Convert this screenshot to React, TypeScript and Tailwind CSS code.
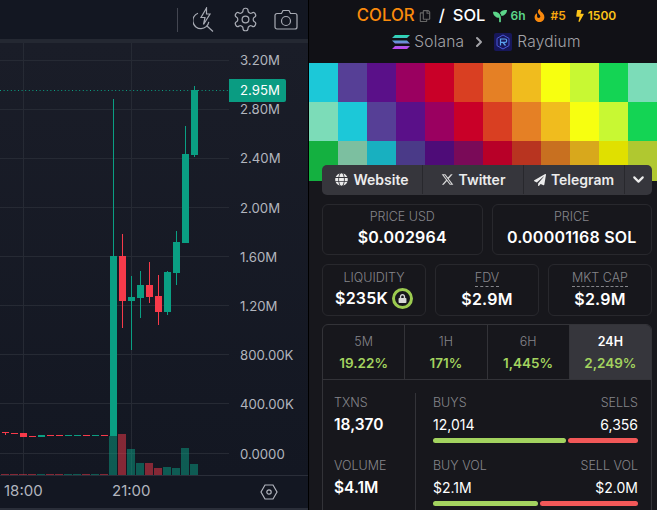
import { FaGlobe, FaPaperPlane, FaFire, FaBolt, FaSeedling, FaRegCopy, FaLock } from "react-icons/fa";
import { FaXTwitter } from "react-icons/fa6";
import { LuChevronDown, LuChevronRight } from "react-icons/lu";

const UP = "#0a9f83";
const DOWN = "#f73a4a";

// x, body top, body bottom, wick top, wick bottom
const candles: [number, number, number, number, number, string][] = [
  [110, 256, 436, 99, 436, UP],
  [119, 256, 301, 234, 328, DOWN],
  [128, 297, 301, 276, 350, UP],
  [137, 285, 298, 271, 318, UP],
  [146, 285, 297, 262, 303, DOWN],
  [155, 296, 312, 275, 325, DOWN],
  [164, 272, 312, 271, 315, UP],
  [173, 242, 273, 231, 285, UP],
  [182, 154, 243, 126, 243, UP],
  [191, 90, 155, 86, 157, UP],
  [2, 432, 433, 432, 435, DOWN],
  [11, 433, 434, 433, 434, DOWN],
  [20, 433, 437, 433, 437, DOWN],
  [29, 436, 437, 436, 437, DOWN],
  [38, 435, 437, 435, 437, UP],
  [47, 435, 436, 435, 436, DOWN],
  [56, 435, 436, 435, 436, DOWN],
  [65, 435, 436, 435, 436, UP],
  [74, 435, 436, 435, 436, UP],
  [83, 435, 436, 435, 436, DOWN],
  [92, 435, 436, 435, 436, UP],
  [101, 435, 436, 435, 436, DOWN],
];

const volumes: [number, number, string][] = [
  [1, 474, DOWN], [10, 474, DOWN], [19, 474, DOWN], [28, 474, DOWN], [37, 474, UP], [46, 474, DOWN],
  [55, 474, DOWN], [64, 474, UP], [73, 474, UP], [82, 474, DOWN], [91, 474, UP], [100, 474, DOWN],
  [109, 436, UP], [118, 434, DOWN], [127, 449, UP], [136, 463, UP], [145, 463, DOWN],
  [154, 468, DOWN], [163, 467, UP], [172, 468, UP], [181, 448, UP], [190, 464, UP],
];

const gridY = [60, 109, 158, 207, 256, 305, 354, 403, 453];
const prices = ["3.20M", "2.80M", "2.40M", "2.00M", "1.60M", "1.20M", "800.00K", "400.00K", "0.0000"];

const row1 = ["#1cc8d8", "#563f96", "#5a1089", "#9a0060", "#c90028", "#d93f22", "#e58025", "#f0bc1e", "#f7ff10", "#c8f833", "#14d454", "#7cdcb8"];
const row2 = ["#7cdcb8", "#1cc8d8", "#563f96", "#5a1089", "#9a0060", "#c90028", "#d93f22", "#e58025", "#f0bc1e", "#f7ff10", "#c8f833", "#14d454"];
const row3 = ["#14b040", "#7cbfa0", "#18b0c0", "#4a3a88", "#4e0c78", "#7a0a58", "#b80028", "#b83420", "#c87020", "#d8a81c", "#e0e000", "#b0c830"];

function Chart() {
  return (
    <svg width="229" height="432" viewBox="0 43 229 432" className="block">
      {gridY.map((y) => (
        <line key={y} x1="0" x2="229" y1={y + 0.5} y2={y + 0.5} stroke="#262a34" />
      ))}
      <line x1="23.5" x2="23.5" y1="43" y2="475" stroke="#262a34" />
      <line x1="131.5" x2="131.5" y1="43" y2="475" stroke="#262a34" />
      {volumes.map(([x, top, c], i) => (
        <rect key={i} x={x} y={top} width="8" height={475 - top} fill={c} opacity="0.5" />
      ))}
      {candles.map(([x, t, b, wt, wb, c], i) => (
        <g key={i} fill={c}>
          <rect x={x + 3} y={wt} width="1" height={wb - wt} />
          <rect x={x} y={t} width="7" height={b - t} />
        </g>
      ))}
      <line x1="0" x2="229" y1="90.5" y2="90.5" stroke={UP} strokeDasharray="1 2.6" />
    </svg>
  );
}

function PriceAxis() {
  return (
    <div className="relative w-[79px] h-[432px] text-[13.2px] text-[#b2b5be] font-['Inter',sans-serif]">
      <div className="flex flex-col pt-[8px] pl-[11px]">
        {prices.map((p) => (
          <div key={p} className="h-[49.2px] leading-[18px]">{p}</div>
        ))}
      </div>
      <div className="absolute left-0 top-[36px] w-[57px] h-[23px] rounded-r-[2px] bg-[#0a9c82] text-white text-center leading-[23px] pl-[5px]">2.95M</div>
    </div>
  );
}

function ChartPane() {
  return (
    <div className="w-[308px] h-full shrink-0 flex flex-col bg-[#131722]">
      <div className="h-[39px] flex items-center justify-end pr-[10px] text-[#a8abb4]">
        <div className="w-px h-[24px] bg-[#434651] mr-[15px]" />
        <svg width="21" height="25" viewBox="0 0 21 25" fill="none" stroke="currentColor" strokeWidth="1.2" className="mr-[18px]">
          <path d="M5 6.2A8 8 0 1 0 15.8 14.8" />
          <path d="M14 19l6 5.5" />
          <path d="M13.5 1L8 10.5h4L10.5 17.5 17 7h-3.5z" />
        </svg>
        <svg width="27" height="27" viewBox="0 0 24 24" fill="none" stroke="currentColor" strokeWidth="1.1" className="mr-[15px]">
          <circle cx="12" cy="12" r="3" />
          <path d="M12.22 2h-.44a2 2 0 0 0-2 2v.18a2 2 0 0 1-1 1.73l-.43.25a2 2 0 0 1-2 0l-.15-.08a2 2 0 0 0-2.73.73l-.22.38a2 2 0 0 0 .73 2.73l.15.1a2 2 0 0 1 1 1.72v.51a2 2 0 0 1-1 1.74l-.15.09a2 2 0 0 0-.73 2.73l.22.38a2 2 0 0 0 2.73.73l.15-.08a2 2 0 0 1 2 0l.43.25a2 2 0 0 1 1 1.73V20a2 2 0 0 0 2 2h.44a2 2 0 0 0 2-2v-.18a2 2 0 0 1 1-1.73l.43-.25a2 2 0 0 1 2 0l.15.08a2 2 0 0 0 2.73-.73l.22-.39a2 2 0 0 0-.73-2.73l-.15-.08a2 2 0 0 1-1-1.74v-.5a2 2 0 0 1 1-1.74l.15-.09a2 2 0 0 0 .73-2.73l-.22-.38a2 2 0 0 0-2.73-.73l-.15.08a2 2 0 0 1-2 0l-.43-.25a2 2 0 0 1-1-1.73V4a2 2 0 0 0-2-2z" />
        </svg>
        <svg width="24" height="21" viewBox="0 0 24 21" fill="none" stroke="currentColor" strokeWidth="1.2">
          <path d="M3 4.5h4.5L9 1.5h6l1.5 3H21a2 2 0 0 1 2 2V18a2 2 0 0 1-2 2H3a2 2 0 0 1-2-2V6.5a2 2 0 0 1 2-2z" />
          <circle cx="12" cy="12" r="4.5" />
        </svg>
      </div>
      <div className="h-[4px] bg-[#242832]" />
      <div className="flex bg-linear-to-b from-[#1a1d28] to-[#131722]">
        <Chart />
        <PriceAxis />
      </div>
      <div className="flex-1 flex flex-col border-t border-[#2a2e39] text-[15px] text-[#b2b5be] font-['Inter',sans-serif]">
        <div className="flex items-center h-[31px]">
          <span className="w-[112px] pl-[4px]">18:00</span>
          <span className="w-[117px]">21:00</span>
          <span className="flex-1 flex justify-center">
            <svg width="18" height="16" viewBox="0 0 18 16" fill="none" stroke="currentColor" strokeWidth="1.2">
              <path d="M5 1h8l4 7-4 7H5L1 8z" />
              <circle cx="9" cy="8" r="2.2" />
            </svg>
          </span>
        </div>
        <div className="mt-auto h-[2px] bg-[#2a2e39]" />
      </div>
    </div>
  );
}

function Header() {
  return (
    <div className="h-[63px] flex flex-col items-center pt-[4px] pl-[7px] bg-[#111116]">
      <div className="flex items-center h-[23px] font-medium">
        <span className="text-[#fb8b0c] text-[16.8px]">COLOR</span>
        <FaRegCopy className="text-[#666] ml-[4px] text-[12px]" />
        <span className="text-white text-[16.5px] mx-[8px]">/</span>
        <span className="text-white text-[16.5px]">SOL</span>
        <FaSeedling className="text-[#5cd68a] ml-[8px] text-[14px]" />
        <span className="text-[#5cd68a] text-[12px] ml-[3px] font-semibold">6h</span>
        <FaFire className="text-[#f8890e] ml-[8px] text-[13px]" />
        <span className="text-[#f8a80e] text-[12px] ml-[4px] font-semibold">#5</span>
        <FaBolt className="text-[#fcc419] ml-[8px] text-[12px]" />
        <span className="text-[#fcc419] text-[12px] ml-[2px] font-semibold">1500</span>
      </div>
      <div className="flex items-center h-[26px] mt-[2px] text-[15.5px] font-light tracking-[0.2px] text-[#a3a3a8]">
        <svg width="18" height="14" viewBox="0 0 18 14" className="mr-[4px]">
          <defs>
            <linearGradient id="sol" x1="0" y1="0" x2="0" y2="1">
              <stop offset="0" stopColor="#25e0b0" />
              <stop offset="0.5" stopColor="#6a8fd8" />
              <stop offset="1" stopColor="#c840f0" />
            </linearGradient>
          </defs>
          <path d="M3 0h15l-3 3H0zM0 5.5h15l3 3H3zM3 11h15l-3 3H0z" fill="url(#sol)" />
        </svg>
        <span>Solana</span>
        <LuChevronRight className="mx-[7px] text-[16px] text-[#a3a3a8]" strokeWidth={3} />
        <svg width="18" height="18" viewBox="0 0 18 18" className="mr-[5px]">
          <rect width="18" height="18" rx="2" fill="#17175a" />
          <path d="M9 2l6 3.4v7.2L9 16l-6-3.4V5.4z" fill="none" stroke="#4a58d8" strokeWidth="1" />
          <path d="M6.5 12.5V6H11a1.7 1.7 0 0 1 0 3.4H6.5M9 9.5l2.5 3" fill="none" stroke="#5aa2ee" strokeWidth="1.2" />
        </svg>
        <span>Raydium</span>
      </div>
    </div>
  );
}

function Banner() {
  return (
    <div className="grid grid-cols-12 grid-rows-[39px_39px_40px] h-[118px] bg-[#131318]">
      {[...row1, ...row2, ...row3].map((c, i) => (
        <div key={i} style={{ backgroundColor: c }} />
      ))}
    </div>
  );
}

function Links() {
  return (
    <div className="relative -mt-[16px] ml-[13px] mr-[5px] h-[30px] pb-px flex rounded-[5px] bg-[#36363c] text-[14px] font-semibold text-[#ececec] divide-x divide-[#28282d]">
      <div className="w-[101px] flex items-center justify-center gap-[5px]"><FaGlobe className="text-[13px]" />Website</div>
      <div className="w-[101px] flex items-center justify-center gap-[5px]"><FaXTwitter className="text-[13px] text-[#d8d8d8]" />Twitter</div>
      <div className="w-[101px] flex items-center justify-center gap-[5px]"><FaPaperPlane className="text-[12px]" />Telegram</div>
      <div className="flex-1 flex items-center justify-center"><LuChevronDown className="text-[17px]" strokeWidth={3} /></div>
    </div>
  );
}

function Stat({ label, value, dashed, className, children }: { label: string; value: string; dashed?: boolean; className?: string; children?: React.ReactNode }) {
  return (
    <div className={"flex-1 min-w-0 rounded-[6px] border border-[#28282d] flex flex-col items-center " + (className ?? "pt-[4px]")}>
      <span className={"text-[12.5px] font-light leading-[16px] text-[#85858a]" + (dashed ? " border-b border-dashed border-[#85858a]" : "")}>{label}</span>
      <span className="flex items-center gap-[4px] text-[16px] tracking-[0.2px] font-semibold text-white leading-[22px] mt-[1px]">{value}{children}</span>
    </div>
  );
}

function Tab({ label, value, active }: { label: string; value: string; active?: boolean }) {
  return (
    <div className={"flex-1 flex flex-col items-center pt-[7px] border-r border-[#333338] last:border-r-0 " + (active ? "bg-[#36363c]" : "")}>
      <span className={"text-[12.5px] leading-[20px] " + (active ? "text-white font-semibold" : "font-light text-[#85858a]")}>{label}</span>
      <span className="text-[13.5px] font-semibold text-[#a3d35f] leading-[22px]">{value}</span>
    </div>
  );
}

function Ratio({ l, r, lv, rv, buy, className }: { l: string; r: string; lv: string; rv: string; buy: number; className?: string }) {
  return (
    <div className={className}>
      <div className="flex justify-between text-[12.5px] font-light leading-[16px] text-[#85858a]"><span>{l}</span><span>{r}</span></div>
      <div className="flex justify-between text-[14px] leading-[22px] text-white mt-[3px]"><span>{lv}</span><span>{rv}</span></div>
      <div className="flex gap-[2px] h-[5px] mt-[2px]">
        <div className="rounded-full bg-[#a3d35f]" style={{ width: buy }} />
        <div className="flex-1 rounded-full bg-[#f25858]" />
      </div>
    </div>
  );
}

function StatsPane() {
  return (
    <div className="mt-[8px] ml-[13px] mr-[5px] rounded-t-[6px] border border-[#333338] overflow-hidden h-[200px]">
      <div className="flex h-[55px] border-b border-[#333338]">
        <Tab label="5M" value="19.22%" />
        <Tab label="1H" value="171%" />
        <Tab label="6H" value="1,445%" />
        <Tab label="24H" value="2,249%" active />
      </div>
      <div className="flex pt-[15px] pl-[11px] pr-[13px]">
        <div className="w-[82px] border-r border-[#333338] h-[130px] -mt-[2px] pt-[2px]">
          <div className="text-[12.5px] font-light leading-[16px] text-[#85858a]">TXNS</div>
          <div className="text-[15.5px] font-semibold text-white leading-[22px] mt-[3px]">18,370</div>
          <div className="text-[12.5px] font-light leading-[16px] text-[#85858a] mt-[22px]">VOLUME</div>
          <div className="text-[15.5px] font-semibold text-white leading-[22px] mt-[3px]">$4.1M</div>
        </div>
        <div className="flex-1 pl-[17px]">
          <Ratio l="BUYS" r="SELLS" lv="12,014" rv="6,356" buy={133} />
          <Ratio l="BUY VOL" r="SELL VOL" lv="$2.1M" rv="$2.0M" buy={105} className="mt-[15px]" />
        </div>
      </div>
    </div>
  );
}

function InfoPane() {
  return (
    <div className="flex-1 min-w-0 bg-[#17171c] font-['Inter',sans-serif]">
      <Header />
      <Banner />
      <Links />
      <div className="ml-[13px] mr-[5px] mt-[9px] flex flex-col gap-[9px]">
        <div className="flex gap-[9px] h-[51px]">
          <Stat label="PRICE USD" value="$0.002964" />
          <Stat label="PRICE" value="0.00001168 SOL" />
        </div>
        <div className="flex gap-[9px] h-[52px]">
          <Stat label="LIQUIDITY" value="$235K" className="pt-[5px]">
            <span className="w-[21px] h-[21px] rounded-full border-[3px] border-[#9ccb50] flex items-center justify-center">
              <FaLock className="text-[9px] text-[#d8d8d8]" />
            </span>
          </Stat>
          <Stat label="FDV" value="$2.9M" dashed className="pt-[5px]" />
          <Stat label="MKT CAP" value="$2.9M" dashed className="pt-[5px]" />
        </div>
      </div>
      <StatsPane />
    </div>
  );
}

export default function App() {
  return (
    <div className="w-[657px] h-[510px] flex overflow-hidden bg-[#17171c]">
      <ChartPane />
      <div className="w-px bg-[#000]" />
      <InfoPane />
    </div>
  );
}
